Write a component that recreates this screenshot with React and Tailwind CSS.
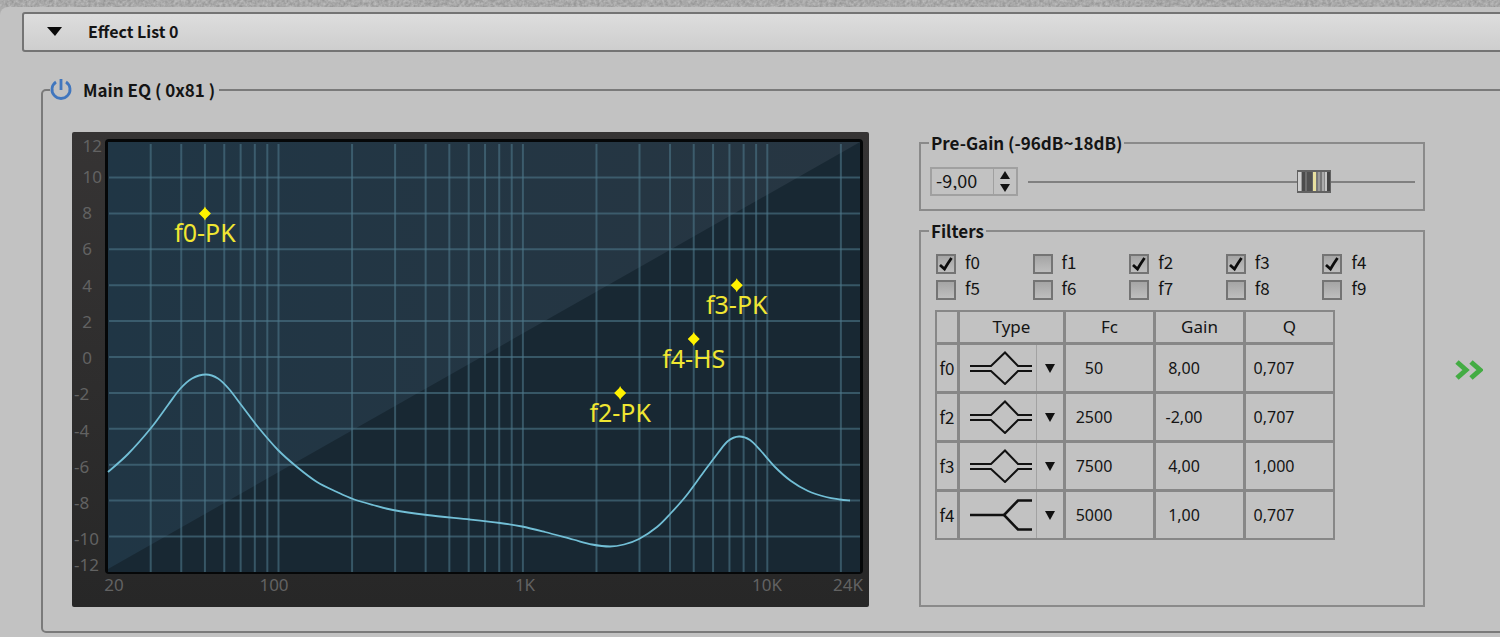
import { useState } from "react";

// Chart space: 797 x 475
const freqX = (f) => 206.5 + 244.4 * Math.log10(f / 100);
const gainY = (db) => 225 - 17.95 * db;

const GRID_FREQS = [
  30, 40, 50, 60, 70, 80, 90, 100, 200, 300, 400, 500, 600, 700, 800, 900, 1000,
  2000, 3000, 4000, 5000, 6000, 7000, 8000, 9000, 10000, 20000,
];
const GRID_GAINS = [10, 8, 6, 4, 2, 0, -2, -4, -6, -8, -10];

const Y_LABELS = [
  { text: "12", x: 30, y: 20, anchor: "end" },
  { text: "10", x: 30, y: 51, anchor: "end" },
  { text: "8", x: 20, y: 87, anchor: "end" },
  { text: "6", x: 20, y: 123, anchor: "end" },
  { text: "4", x: 20, y: 160, anchor: "end" },
  { text: "2", x: 20, y: 196, anchor: "end" },
  { text: "0", x: 20, y: 232, anchor: "end" },
  { text: "-2", x: 2, y: 268, anchor: "start" },
  { text: "-4", x: 2, y: 305, anchor: "start" },
  { text: "-6", x: 2, y: 341, anchor: "start" },
  { text: "-8", x: 2, y: 377, anchor: "start" },
  { text: "-10", x: 2, y: 413, anchor: "start" },
  { text: "-12", x: 2, y: 439, anchor: "start" },
];

const X_LABELS = [
  { text: "20", x: 42 },
  { text: "100", x: 202 },
  { text: "1K", x: 453 },
  { text: "10K", x: 695 },
  { text: "24K", x: 776 },
];

const MARKERS = [
  { label: "f0-PK", freq: 50, gain: 8 },
  { label: "f2-PK", freq: 2500, gain: -2 },
  { label: "f3-PK", freq: 7500, gain: 4 },
  { label: "f4-HS", freq: 5000, gain: 1 },
];

const CURVE = [
  [36, 340], [56, 322], [79, 296], [96, 273], [108, 257], [120, 246.500],
  [134, 242.500], [146, 246.500], [157, 257], [170, 274], [186, 295], [206, 318],
  [225, 335], [245, 350], [265, 360], [281, 367], [301, 373], [321, 378],
  [355, 383], [398, 387.500], [428, 391], [450, 394.500], [473, 400], [501, 407.500],
  [520, 412.500], [538, 414.500], [552, 412.500], [567, 407], [585, 395], [599, 381],
  [614, 364], [631, 341], [646, 321], [656, 309], [667, 304.500], [678, 308],
  [689, 319], [703, 335], [719, 349], [736, 359], [754, 365], [768, 367.500],
  [778, 368.500],
];

const FILTERS = [
  { id: "f0", type: "PK", fc: "50", gain: "8,00", q: "0,707" },
  { id: "f2", type: "PK", fc: "2500", gain: "-2,00", q: "0,707" },
  { id: "f3", type: "PK", fc: "7500", gain: "4,00", q: "1,000" },
  { id: "f4", type: "HS", fc: "5000", gain: "1,00", q: "0,707" },
];

// Smooth path through all points (Catmull-Rom to bezier)
function smoothPath(points) {
  let d = `M${points[0][0]} ${points[0][1]}`;
  for (let i = 0; i < points.length - 1; i++) {
    const p0 = points[i - 1] || points[i];
    const p1 = points[i];
    const p2 = points[i + 1];
    const p3 = points[i + 2] || p2;
    d += ` C${p1[0] + (p2[0] - p0[0]) / 6} ${p1[1] + (p2[1] - p0[1]) / 6}`;
    d += ` ${p2[0] - (p3[0] - p1[0]) / 6} ${p2[1] - (p3[1] - p1[1]) / 6}`;
    d += ` ${p2[0]} ${p2[1]}`;
  }
  return d;
}

function EqChart() {
  return (
    <svg viewBox="0 0 797 475" className="block w-full h-auto font-['Noto_Sans',sans-serif]">
      <defs>
        <linearGradient id="frame" x1="0" y1="0" x2="0" y2="1">
          <stop offset="0" stopColor="#363434" />
          <stop offset="1" stopColor="#272727" />
        </linearGradient>
        <linearGradient id="glass" x1="0" y1="0" x2="1" y2="0">
          <stop offset="0" stopColor="#203645" />
          <stop offset="1" stopColor="#273642" />
        </linearGradient>
      </defs>
      <rect width="797" height="475" rx="2" fill="url(#frame)" />
      <rect x="33" y="7" width="758" height="435" rx="4" fill="#050708" />
      <rect x="36" y="10" width="752" height="430" fill="#182833" />
      <path d="M36 10H788L36 437Z" fill="url(#glass)" />
      <g stroke="#4d7689" strokeOpacity="0.6" strokeWidth="2">
        {GRID_FREQS.map((f) => (
          <line key={f} x1={freqX(f)} x2={freqX(f)} y1="12" y2="440" />
        ))}
        {GRID_GAINS.map((g) => (
          <line key={g} x1="37" x2="788" y1={gainY(g)} y2={gainY(g)} />
        ))}
      </g>
      <path d={smoothPath(CURVE)} fill="none" stroke="#72bfd6" strokeWidth="1.8" />
      <g fill="#626262" fontSize="17">
        {Y_LABELS.map((l) => (
          <text key={l.text} x={l.x} y={l.y} textAnchor={l.anchor}>{l.text}</text>
        ))}
        {X_LABELS.map((l) => (
          <text key={l.text} x={l.x} y="459" textAnchor="middle">{l.text}</text>
        ))}
      </g>
      {MARKERS.map((m) => {
        const x = freqX(m.freq);
        const y = gainY(m.gain);
        return (
          <g key={m.label} fill="#f0e632">
            <path
              d={`M${x} ${y - 7}l1 2 5 5-5 5-1 2-1-2-5-5 5-5z`}
              fill="#fff200"
            />
            <text x={x} y={y + 29} textAnchor="middle" fontSize="25">{m.label}</text>
          </g>
        );
      })}
    </svg>
  );
}

function PowerIcon() {
  return (
    <svg viewBox="0 0 22 22" className="w-[22px] h-[22px]" fill="none" stroke="#4076be" strokeWidth="2.8">
      <path d="M6 3A9 9 0 1 0 16 3" />
      <path d="M11 0V11" />
    </svg>
  );
}

function FilterIcon({ type }) {
  return (
    <svg viewBox="0 0 64 34" className="w-16 h-[34px]" fill="none" stroke="#111" strokeWidth="2">
      {type === "PK" ? (
        <>
          <path d="M1 15H22L36 1.5 49 15H63" />
          <path d="M1 20H22L36 33 49 20H63" />
        </>
      ) : (
        <>
          <path d="M1 17H36" strokeWidth="2.6" />
          <path d="M63 2.500H49L35 17 49 31.500H63" strokeWidth="2.6" />
        </>
      )}
    </svg>
  );
}

function FilterCheckbox({ id, defaultChecked }) {
  return (
    <label className="flex items-center gap-[9px] h-[26px] text-[17px] leading-5">
      <span className="grid">
        <input
          type="checkbox"
          defaultChecked={defaultChecked}
          className="peer col-start-1 row-start-1 appearance-none w-5 h-5 border-2 border-[#747474] bg-linear-to-b from-[#a5a5a5] to-[#bebebe]"
        />
        <svg
          viewBox="0 0 20 20"
          className="invisible peer-checked:visible pointer-events-none col-start-1 row-start-1 w-5 h-5"
          fill="none"
          stroke="#0c0c0c"
          strokeWidth="2.8"
        >
          <path d="M4 11L8.500 15Q12 9 15.500 4" />
        </svg>
      </span>
      <span className="pb-1">{id}</span>
    </label>
  );
}

function ValueCell({ label, value }) {
  return (
    <td className="p-0">
      <input
        type="text"
        aria-label={label}
        defaultValue={value}
        className="block w-14 h-11 text-center text-base font-['Noto_Sans',sans-serif]"
      />
    </td>
  );
}

function PreGain() {
  const [gain, setGain] = useState(-9);
  const step = (n) => setGain(Math.min(18, Math.max(-96, gain + n)));

  return (
    <fieldset className="border-2 border-[#8a8a8a] px-2 pb-[13px]">
      <legend className="px-[2px] text-[17px] leading-[22px] font-bold">Pre-Gain (-96dB~18dB)</legend>
      <div className="flex items-center gap-[10px] pt-[13px] pl-[1px]">
        <div className="flex w-[88px] h-[29px] border-2 border-[#a0a0a0]">
          <input
            type="text"
            aria-label="Pre-Gain"
            readOnly
            value={gain.toFixed(2).replace(".", ",")}
            className="w-[61px] pl-1 pb-1 text-[18px] leading-5"
          />
          <div className="flex flex-1 flex-col items-center justify-center gap-[5px] border-l border-[#a0a0a0]">
            <button type="button" aria-label="Increase" onClick={() => step(1)}>
              <svg viewBox="0 0 10 8" className="block w-[10px] h-2"><path d="M5 0L10 8H0z" fill="#111" /></svg>
            </button>
            <button type="button" aria-label="Decrease" onClick={() => step(-1)}>
              <svg viewBox="0 0 10 8" className="block w-[10px] h-2"><path d="M5 8L10 0H0z" fill="#111" /></svg>
            </button>
          </div>
        </div>
        <input
          type="range"
          aria-label="Pre-Gain level"
          min="-96"
          max="18"
          value={gain}
          onChange={(e) => setGain(Number(e.target.value))}
          className="flex-1 min-w-0 h-6 appearance-none bg-[linear-gradient(#808080,#808080)] bg-[length:100%_2px] bg-center bg-no-repeat [&::-webkit-slider-thumb]:appearance-none [&::-webkit-slider-thumb]:w-[34px] [&::-webkit-slider-thumb]:h-[23px] [&::-webkit-slider-thumb]:border-y-2 [&::-webkit-slider-thumb]:border-x [&::-webkit-slider-thumb]:border-[#626262] [&::-webkit-slider-thumb]:bg-[linear-gradient(90deg,#cfcfcf_0_8%,#9a9a9a_8%_13%,#4c4c4c_13%_22%,#6d6d6d_22%_28%,#505050_28%_44%,#666_44%_48%,#e8e0a0_48%_55%,#777_55%_62%,#999_62%_70%,#777_70%_74%,#ababab_74%_80%,#888_80%_85%,#c4c4c4_85%_91%,#444_91%)]"
        />
      </div>
    </fieldset>
  );
}

function Filters() {
  return (
    <fieldset className="flex-1 border-2 border-[#8a8a8a] pl-2 pr-1">
      <legend className="px-[2px] text-[17px] leading-[22px] font-bold">Filters</legend>
      <div className="grid grid-cols-5 pt-[9px] pl-[7px] pb-[7px]">
        {["f0", "f1", "f2", "f3", "f4", "f5", "f6", "f7", "f8", "f9"].map((id) => (
          <FilterCheckbox key={id} id={id} defaultChecked={FILTERS.some((f) => f.id === id)} />
        ))}
      </div>
      <table className="ml-[6px] w-[400px] table-fixed border-separate border-spacing-0 border-2 border-[#878787] [&_th]:border-[#878787] [&_td]:border-[#878787] [&_th]:border-r-[3px] [&_td]:border-r-[3px] [&_th]:border-b-[3px] [&_td]:border-b-[3px] [&_tr>:last-child]:border-r-0 [&_tbody>:last-child>*]:border-b-0">
        <colgroup>
          <col className="w-[23px]" />
          <col className="w-[106px]" />
          <col className="w-[90px]" />
          <col className="w-[90px]" />
          <col className="w-[87px]" />
        </colgroup>
        <thead>
          <tr className="h-[33px] text-[17px] leading-5 font-['Noto_Sans',sans-serif] [&>th]:font-normal">
            <th aria-label="Filter" />
            <th>Type</th>
            <th>Fc</th>
            <th>Gain</th>
            <th>Q</th>
          </tr>
        </thead>
        <tbody>
          {FILTERS.map((f) => (
            <tr key={f.id} className="h-[49px] last:h-[46px]">
              <th className="p-0 text-[17px] leading-5 font-normal">{f.id}</th>
              <td className="p-0">
                <div className="relative flex h-[46px]">
                  <div className="flex w-[77px] items-center justify-center pl-[5px] border-r border-[#a2a2a2]">
                    <FilterIcon type={f.type} />
                  </div>
                  <div className="flex flex-1 items-center justify-center">
                    <svg viewBox="0 0 10 9" className="w-[10px] h-[9px]"><path d="M5 9L10 0H0z" fill="#111" /></svg>
                  </div>
                  <select
                    aria-label={`${f.id} type`}
                    defaultValue={f.type}
                    className="absolute inset-0 w-full opacity-0"
                  >
                    <option value="PK">PK</option>
                    <option value="HS">HS</option>
                  </select>
                </div>
              </td>
              <ValueCell label={`${f.id} Fc`} value={f.fc} />
              <ValueCell label={`${f.id} Gain`} value={f.gain} />
              <ValueCell label={`${f.id} Q`} value={f.q} />
            </tr>
          ))}
        </tbody>
      </table>
    </fieldset>
  );
}

export default function App() {
  return (
    <div className="min-h-screen overflow-hidden bg-[#acacac] text-[#141414] font-['Noto_Sans_CJK_SC','Open_Sans',sans-serif]">
      <svg className="block w-full h-[7px]" aria-hidden="true">
        <filter id="grain" colorInterpolationFilters="sRGB">
          <feTurbulence type="fractalNoise" baseFrequency="0.35" numOctaves="2" />
          <feColorMatrix values="0.24 0 0 0 0.54  0.24 0 0 0 0.54  0.24 0 0 0 0.54  0 0 0 0 1" />
        </filter>
        <rect width="100%" height="100%" filter="url(#grain)" />
      </svg>
      <div className="min-h-screen rounded-tl-lg bg-[#c2c2c2] pt-[5px] pl-[22px]">
        <button
          type="button"
          className="flex items-center gap-[26px] h-10 w-[calc(100%+12px)] pl-[23px] pb-[2px] rounded-[3px] border-2 border-[#747474] bg-linear-to-b from-[#dddddd] to-[#cecece] text-base leading-6 font-bold"
        >
          <svg viewBox="0 0 15 9" className="w-[15px] h-[9px]"><path d="M0 0H15L8 9z" fill="#0a0a0a" /></svg>
          Effect List 0
        </button>

        <fieldset className="mt-6 ml-[19px] w-[calc(100%+12px)] rounded-[5px] border-2 border-[#7a7a7a] px-[7px]">
          <legend className="flex items-center gap-[11px] pr-1 h-7 text-[17px] font-bold">
            <PowerIcon />
            Main EQ ( 0x81 )
          </legend>
          <div className="flex pt-[28px] pb-6 pl-[22px] pr-[39px]">
            <div className="flex-1 min-w-0">
              <EqChart />
            </div>
            <div className="ml-[50px] flex w-[506px] shrink-0 flex-col gap-[9px]">
              <PreGain />
              <Filters />
            </div>
            <button type="button" aria-label="Next" className="ml-[30px] self-center">
              <svg viewBox="0 0 28 20" className="w-7 h-5" fill="none" stroke="#43ac43" strokeWidth="5">
                <path d="M2 2L11 10 2 18" />
                <path d="M16 2L25 10 16 18" />
              </svg>
            </button>
          </div>
        </fieldset>
      </div>
    </div>
  );
}
